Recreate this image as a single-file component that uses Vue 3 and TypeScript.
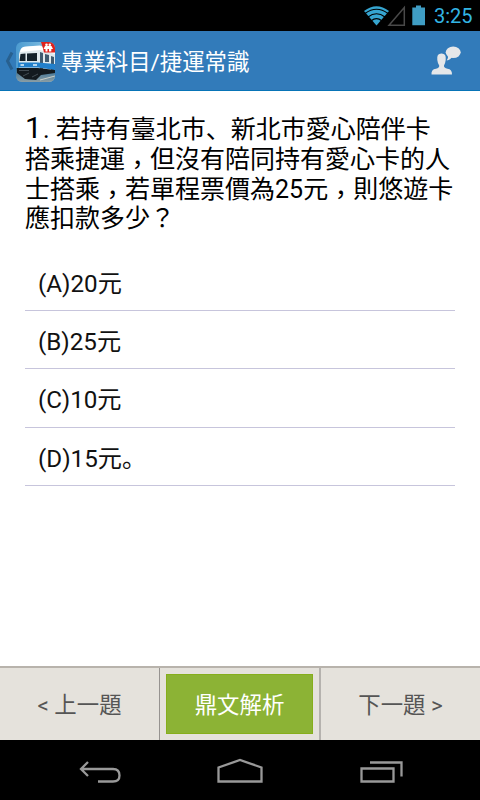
<script setup lang="ts">
interface Part {
  text: string
  kind: 'number' | 'text' | 'comma' | 'pause'
}

const question: Part[][] = [
  [
    { text: '1', kind: 'number' },
    { text: '. 若持有臺北市', kind: 'text' },
    { text: '、', kind: 'pause' },
    { text: '新北市愛心陪伴卡', kind: 'text' },
  ],
  [
    { text: '搭乘捷運', kind: 'text' },
    { text: '，', kind: 'comma' },
    { text: '但沒有陪同持有愛心卡的人', kind: 'text' },
  ],
  [
    { text: '士搭乘', kind: 'text' },
    { text: '，', kind: 'comma' },
    { text: '若單程票價為25元', kind: 'text' },
    { text: '，', kind: 'comma' },
    { text: '則悠遊卡', kind: 'text' },
  ],
  [{ text: '應扣款多少？', kind: 'text' }],
]

const options: string[] = ['(A)20元', '(B)25元', '(C)10元', '(D)15元。']
</script>

<template>
  <div class="screen">
    <div class="status">
      <svg class="signals" viewBox="0 0 66 30" width="66" height="30">
        <path d="M0 11Q12.500 1.500 25 11L12.500 25.500Z" fill="#36a5d0" />
        <path d="M1 13.500Q12.500 5 24 13.500M4 17Q12.500 10.500 21 17M7.300 20.700Q12.500 16.500 17.700 20.700" fill="none" stroke="#000" stroke-width="1.200" />
        <path d="M25 25.200L40.300 7.500V25.200Z" fill="none" stroke="#494949" stroke-width="1.500" />
        <path d="M52 5.500h5v2h4v17.700H48.300V7.500H52Z" fill="#3f9dc4" />
      </svg>
      <span class="clock">3:25</span>
    </div>

    <header class="bar">
      <svg class="up" viewBox="0 0 10 20" width="10" height="20">
        <path d="M8 1.500L3.500 10L8 18.500" fill="none" stroke="#28608f" stroke-width="3" />
      </svg>
      <svg class="logo" viewBox="0 0 39 40" width="39" height="40">
        <defs>
          <clipPath id="tile"><rect width="39" height="40" rx="6" /></clipPath>
          <linearGradient id="sky" x1="0" y1="0" x2="1" y2="0">
            <stop offset="0" stop-color="#4c9bd0" />
            <stop offset="1" stop-color="#8cc5e5" />
          </linearGradient>
          <linearGradient id="ground" x1="0" y1="0" x2="0" y2="1">
            <stop offset="0" stop-color="#2c6b97" />
            <stop offset="1" stop-color="#8b9da3" />
          </linearGradient>
        </defs>
        <g clip-path="url(#tile)">
          <rect width="39" height="40" fill="url(#sky)" />
          <path d="M0 26H39V40H0Z" fill="url(#ground)" />
          <path d="M3 12Q4 6 9 5L24 4L39 11V29L22 28L3 26Z" fill="#dfe9ed" />
          <path d="M5 7Q6 4.500 10 4.500L24 3.500L39 10V12L24 8L4 10Z" fill="#fff" />
          <path d="M4.500 12L9.500 11.500V19H3.500ZM11 11.500L21 11V19H11Z" fill="#14212a" />
          <path d="M24 10L27 11V27H24ZM29 12L33 13V20H29ZM35 14L38 15V28H35Z" fill="#3f5b70" />
          <path d="M2 20.500L22 20.500L39 22V28L22 25.500L2 25.500Z" fill="#2280cb" />
          <path d="M4.500 23H8M17 23H21" stroke="#e7f3fb" stroke-width="1.300" />
          <path d="M1 26H22L39 28V31L25 33L20 38L9 37L1 31Z" fill="#131a1f" />
          <path d="M3 28.500H13M7 34L13 31M16 35L22 32" stroke="#48545a" stroke-width="0.900" />
          <path d="M24 38L39 34" stroke="#c9cec8" stroke-width="1" />
          <path d="M25 0H39V10.500H28Q27 6 25 0Z" fill="#df221d" />
          <circle cx="30.500" cy="2.800" r="1.300" fill="#fff" />
          <circle cx="33.800" cy="2.800" r="1.300" fill="#fff" />
          <path d="M29 4H35.500L37 7H35.300V9.500H33V7H31.500V9.500H29.500V7H27.500Z" fill="#fff" />
        </g>
      </svg>
      <h1>專業科目/捷運常識</h1>
      <svg class="contact" viewBox="0 0 30 30" width="30" height="30">
        <path d="M0.500 28.500Q0 23.500 5 22.800Q8.500 22 8.200 19.500Q6.700 17.500 6.300 14Q5.500 7.500 10.500 7.600Q15.500 7.500 14.700 14Q14.300 17.500 13 19.500Q12.700 22 16.500 22.800Q21.200 23.500 21 28.500Z" fill="#e5e7e9" />
        <ellipse cx="22.200" cy="6.300" rx="7.500" ry="5.800" fill="#e5e7e9" />
        <path d="M17 9Q17.500 12 15.700 14.600Q20 13.500 21.500 10Z" fill="#e5e7e9" />
      </svg>
    </header>

    <main>
      <div class="question">
        <div v-for="(line, i) in question" :key="i" class="line">
          <span v-for="(part, j) in line" :key="j" :class="part.kind">{{ part.text }}</span>
        </div>
      </div>
      <ul>
        <li v-for="option in options" :key="option">{{ option }}</li>
      </ul>
    </main>

    <footer>
      <button class="side prev">&lt; 上一題</button>
      <div class="middle"><button class="answer">鼎文解析</button></div>
      <button class="side next">下一題 &gt;</button>
    </footer>

    <nav>
      <svg viewBox="0 0 480 60" width="480" height="60" fill="none" stroke="#999" stroke-width="2.300">
        <path d="M88 22L81 29L88 36M81 29H113Q119.500 29 119.500 35.500Q119.500 41.500 113 41.500H98" />
        <path d="M218.500 41.500V27.500L240 20L261.500 27.500V41.500Z" />
        <path d="M361.500 28.500H393.500V41.500H361.500ZM370 22.500H401.500V36.500" />
      </svg>
    </nav>
  </div>
</template>

<style>
body {
  background: #fff;
}
</style>

<style scoped>
.screen {
  width: 480px;
  height: 800px;
  display: flex;
  flex-direction: column;
  background: #fff;
  font-family: Roboto, "Noto Sans CJK JP", sans-serif;
  overflow: hidden;
}
.status {
  height: 31px;
  flex: none;
  display: flex;
  justify-content: flex-end;
  background: #000;
  padding-right: 8px;
}
.signals {
  margin-right: 4px;
}
.clock {
  width: 38px;
  font-size: 20px;
  line-height: 32px;
  color: #33b5e5;
  white-space: nowrap;
}
.bar {
  height: 60px;
  flex: none;
  box-sizing: border-box;
  display: flex;
  align-items: center;
  background: #327bba;
  border-bottom: 1px solid #0874b7;
  padding: 0 19px 0 4px;
}
.up {
  flex: none;
}
.logo {
  flex: none;
  margin: 2px 0 0 2px;
}
h1 {
  margin: 3px 0 0 6px;
  flex: 1;
  font-size: 22.400px;
  font-weight: 400;
  line-height: 32px;
  color: #fff;
  white-space: nowrap;
}
.contact {
  flex: none;
  margin-top: 1px;
}
main {
  flex: 1;
  padding: 22px 25px 0;
}
.question {
  display: grid;
  grid-template-rows: 32px 30px 29px 29px;
  color: #000;
}
.line {
  font-size: 25px;
  line-height: 30px;
  white-space: nowrap;
}
.number {
  font-size: 30px;
  margin-right: 1px;
}
.comma {
  font-family: "Noto Sans CJK TC", sans-serif;
  line-height: 0;
  vertical-align: -6px;
}
ul {
  list-style: none;
  margin: 20px 0 0;
  padding: 0;
}
li {
  box-sizing: border-box;
  height: 58.200px;
  padding: 0 13px;
  border-bottom: 1px solid #c7c5dc;
  font-size: 24.200px;
  line-height: 62px;
  color: #111;
}
footer {
  height: 74px;
  flex: none;
  box-sizing: border-box;
  display: grid;
  grid-template-columns: 159px 162px 159px;
  background: #e5e2dc;
  border-top: 2px solid #b8b3ac;
}
button {
  border: 0;
  margin: 0;
  padding: 0 0 2px;
  font-family: inherit;
  font-size: 22.400px;
}
.side {
  background: transparent;
  color: #555;
}
.middle {
  display: flex;
  padding: 6px;
  border-left: 1px solid #969390;
  border-right: 2px solid #b5b2ae;
}
.answer {
  flex: 1;
  background: #8cb335;
  border: 1px solid #86ae1c;
  color: #fff;
}
nav {
  height: 60px;
  flex: none;
  background: #000;
}
</style>
